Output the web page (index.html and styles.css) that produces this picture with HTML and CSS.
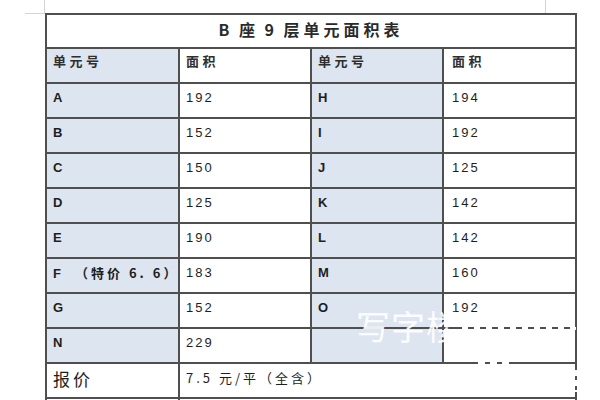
FILE: index.html
```html
<!DOCTYPE html>
<html lang="zh">
<head>
<meta charset="utf-8">
<title>B座9层单元面积表</title>
<link rel="stylesheet" href="styles.css">
</head>
<body>
<div class="page">
  <span class="mark mark-lh"></span>
  <span class="mark mark-lv"></span>
  <span class="mark mark-rv"></span>
  <div class="sheet">
    <div class="cell title">B 座 9 层单元面积表</div>

    <div class="cell key head">单元号</div>
    <div class="cell head">面积</div>
    <div class="cell key head">单元号</div>
    <div class="cell head gap">面积</div>

    <div class="cell key unit">A</div><div class="cell num">192</div>
    <div class="cell key unit">H</div><div class="cell num gap">194</div>

    <div class="cell key unit">B</div><div class="cell num">152</div>
    <div class="cell key unit">I</div><div class="cell num gap">192</div>

    <div class="cell key unit">C</div><div class="cell num">150</div>
    <div class="cell key unit">J</div><div class="cell num gap">125</div>

    <div class="cell key unit">D</div><div class="cell num">125</div>
    <div class="cell key unit">K</div><div class="cell num gap">142</div>

    <div class="cell key unit">E</div><div class="cell num">190</div>
    <div class="cell key unit">L</div><div class="cell num gap">142</div>

    <div class="cell key unit">F<span class="note">（特价 6. 6）</span></div><div class="cell num">183</div>
    <div class="cell key unit">M</div><div class="cell num gap">160</div>

    <div class="cell key unit">G</div><div class="cell num">152</div>
    <div class="cell key unit">O</div><div class="cell num gap">192</div>

    <div class="cell key unit">N</div><div class="cell num">229</div>
    <div class="cell key unit"></div><div class="cell num gap"></div>

    <div class="cell label">报价</div>
    <div class="cell price">7.5 元/平（全含）</div>

    <div class="cell"></div>
    <div class="cell price"></div>
  </div>
  <div class="watermark">写字楼</div>
  <span class="wm-dash wm-dash-h"></span>
  <span class="wm-dash wm-dash-b"></span>
  <span class="wm-dash wm-dash-r"></span>
</div>
</body>
</html>
```

FILE: styles.css
```css
html, body {
  margin: 0;
  padding: 0;
  background: #ffffff;
  overflow: hidden;
}

.page {
  position: relative;
  width: 600px;
  height: 400px;
  padding: 13px 0 0 45px;
  box-sizing: border-box;
  font-family: "Liberation Sans", "Noto Sans CJK SC", sans-serif;
  color: #1e1e1e;
}

.mark {
  position: absolute;
  background: #d4d4d4;
}
.mark-lh { left: 25px; top: 13px; width: 20px; height: 1px; }
.mark-lv { left: 44px; top: 0; width: 1px; height: 13px; }
.mark-rv { left: 545px; top: 0; width: 1px; height: 13px; }

.sheet {
  display: grid;
  grid-template-columns: 133px 132px 132px 133px;
  grid-template-rows: 34px;
  grid-auto-rows: 35px;
  width: max-content;
  border-top: 2px solid #4f4f4f;
  border-left: 2px solid #4f4f4f;
}

.cell {
  box-sizing: border-box;
  border-right: 2px solid #4f4f4f;
  border-bottom: 2px solid #4f4f4f;
  padding: 5px 6px 0;
  font-size: 13px;
  line-height: 17px;
  white-space: nowrap;
  overflow: hidden;
}

.title {
  grid-column: span 4;
  text-align: center;
  font-family: "Noto Sans CJK SC", sans-serif;
  font-weight: 700;
  font-size: 16px;
  letter-spacing: 4px;
  word-spacing: -2px;
  padding-top: 3px;
  padding-left: 6px;
  line-height: 22px;
  color: #2a2a2a;
}

.key {
  background: #dde5f1;
}

.head {
  font-family: "Noto Sans CJK SC", sans-serif;
  font-weight: 700;
  font-size: 13px;
  letter-spacing: 3.5px;
  padding-top: 3px;
  color: #2e2e2e;
}

.gap {
  padding-left: 8px;
}

.unit {
  font-weight: 700;
  font-size: 13px;
  padding-top: 5px;
}

.note {
  font-family: "Noto Sans CJK SC", sans-serif;
  font-weight: 700;
  font-size: 13px;
  letter-spacing: 3px;
  margin-left: 14px;
}

.num {
  font-size: 13px;
  letter-spacing: 2px;
}

.label {
  font-family: "Noto Sans CJK SC", sans-serif;
  font-size: 17px;
  letter-spacing: 3px;
  padding-top: 3px;
  line-height: 24px;
}

.price {
  grid-column: span 3;
  font-family: "Noto Sans CJK SC", sans-serif;
  font-size: 13px;
  letter-spacing: 3px;
  padding-top: 5px;
}

.watermark {
  position: absolute;
  left: 356px;
  top: 319px;
  font-family: "Noto Sans CJK SC", sans-serif;
  font-size: 34px;
  line-height: 14px;
  letter-spacing: 1px;
  color: rgba(255, 255, 255, 0.92);
  white-space: nowrap;
}

.wm-dash {
  position: absolute;
}
.wm-dash-h {
  left: 462px;
  top: 327px;
  width: 114px;
  height: 3px;
  background: repeating-linear-gradient(90deg, #ffffff 0 6px, transparent 6px 12px);
}
.wm-dash-b {
  left: 478px;
  top: 362px;
  width: 34px;
  height: 3px;
  background: repeating-linear-gradient(90deg, #ffffff 0 7px, transparent 7px 12px);
}
.wm-dash-r {
  left: 574px;
  top: 370px;
  width: 3px;
  height: 22px;
  background: repeating-linear-gradient(180deg, #ffffff 0 6px, transparent 6px 10px);
}
```
